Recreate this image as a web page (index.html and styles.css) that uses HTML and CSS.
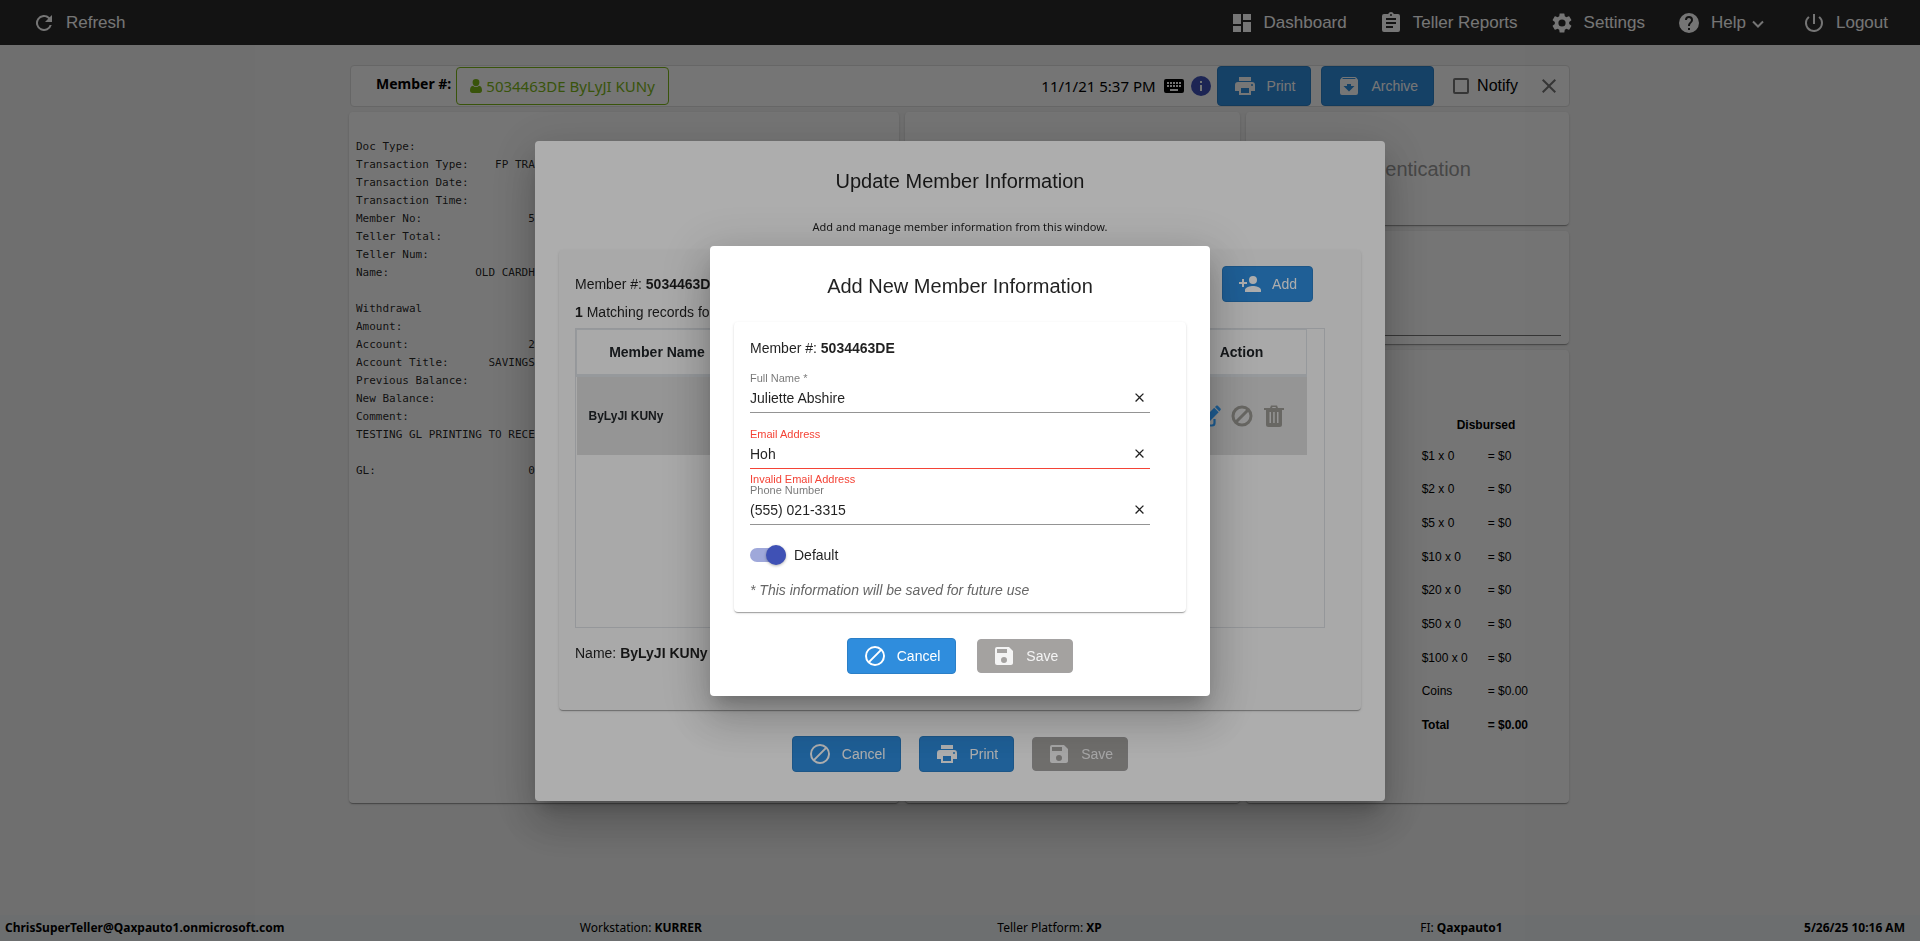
FILE: index.html
```html
<!DOCTYPE html>
<html lang="en">
<head>
<meta charset="utf-8">
<title>Teller</title>
<link rel="stylesheet" href="styles.css">
</head>
<body>
<svg class="sprite" aria-hidden="true">
  <symbol id="i-block" viewBox="0 0 24 24"><path d="M12 2a10 10 0 1 0 0 20 10 10 0 0 0 0-20zM4 12a8 8 0 0 1 12.900-6.310L5.690 16.900A7.900 7.900 0 0 1 4 12zm8 8a7.900 7.900 0 0 1-4.900-1.690L18.310 7.100A8 8 0 0 1 12 20z"/></symbol>
  <symbol id="i-save" viewBox="0 0 24 24"><path d="M17 3H5a2 2 0 0 0-2 2v14a2 2 0 0 0 2 2h14c1.100 0 2-.9 2-2V7l-4-4zm-5 16a3 3 0 1 1 0-6 3 3 0 0 1 0 6zm3-10H5V5h10v4z"/></symbol>
  <symbol id="i-print" viewBox="0 0 24 24"><path d="M19 8H5a3 3 0 0 0-3 3v6h4v4h12v-4h4v-6a3 3 0 0 0-3-3zm-3 11H8v-5h8v5zm3-7a1 1 0 1 1 0-2 1 1 0 0 1 0 2zm-1-9H6v4h12V3z"/></symbol>
  <symbol id="i-archive" viewBox="0 0 24 24"><path d="m20.540 5.230-1.390-1.680C18.880 3.210 18.470 3 18 3H6c-.47 0-.88.210-1.160.550L3.460 5.230C3.170 5.570 3 6.020 3 6.500V19a2 2 0 0 0 2 2h14a2 2 0 0 0 2-2V6.500c0-.48-.17-.93-.46-1.270zM12 17.500 6.500 12H10v-2h4v2h3.500L12 17.500zM5.120 5l.81-1h12l.94 1H5.120z"/></symbol>
  <symbol id="i-close" viewBox="0 0 24 24"><path d="M19 6.410 17.590 5 12 10.590 6.410 5 5 6.410 10.590 12 5 17.590 6.410 19 12 13.410 17.590 19 19 17.590 13.410 12z"/></symbol>
</svg>

<div class="app">
  <nav class="topbar">
    <button class="nav-item" type="button"><svg viewBox="0 0 24 24"><path d="M17.650 6.350A8 8 0 1 0 19.730 14h-2.080A6 6 0 1 1 12 6c1.660 0 3.140.690 4.220 1.780L13 11h7V4l-2.350 2.350z"/></svg>Refresh</button>
    <div class="nav-right">
      <a class="nav-item" href="#"><svg viewBox="0 0 24 24"><path d="M3 13h8V3H3v10zm0 8h8v-6H3v6zm10 0h8V11h-8v10zm0-18v6h8V3h-8z"/></svg>Dashboard</a>
      <a class="nav-item" href="#"><svg viewBox="0 0 24 24"><path d="M19 3h-4.180a3 3 0 0 0-5.640 0H5a2 2 0 0 0-2 2v14a2 2 0 0 0 2 2h14a2 2 0 0 0 2-2V5a2 2 0 0 0-2-2zm-7 0a1 1 0 1 1 0 2 1 1 0 0 1 0-2zm2 14H7v-2h7v2zm3-4H7v-2h10v2zm0-4H7V7h10v2z"/></svg>Teller Reports</a>
      <a class="nav-item" href="#"><svg viewBox="0 0 24 24"><path d="M19.140 12.940c.04-.3.060-.61.060-.94s-.02-.64-.07-.94l2.030-1.580a.49.490 0 0 0 .12-.61l-1.920-3.320a.49.490 0 0 0-.59-.22l-2.390.960c-.5-.38-1.030-.7-1.620-.94l-.36-2.540a.48.480 0 0 0-.48-.41h-3.840c-.24 0-.43.170-.47.410l-.36 2.540c-.59.240-1.130.570-1.620.940l-2.390-.96c-.22-.08-.47 0-.59.220L2.740 8.870c-.12.210-.08.470.12.610l2.030 1.580c-.05.300-.09.630-.09.940s.02.640.070.940l-2.030 1.580a.49.490 0 0 0-.12.610l1.920 3.320c.12.220.37.290.59.220l2.390-.96c.5.380 1.030.700 1.620.940l.36 2.540c.05.240.24.410.48.410h3.840c.24 0 .44-.17.470-.41l.36-2.540c.59-.24 1.130-.56 1.620-.94l2.390.960c.22.080.47 0 .59-.22l1.920-3.320c.12-.22.070-.47-.12-.61l-2.010-1.580zM12 15.600a3.600 3.600 0 1 1 0-7.200 3.600 3.600 0 0 1 0 7.200z"/></svg>Settings</a>
      <button class="nav-item" type="button"><svg viewBox="0 0 24 24"><path d="M12 2a10 10 0 1 0 0 20 10 10 0 0 0 0-20zm1 17h-2v-2h2v2zm2.070-7.750-.9.920C13.450 12.900 13 13.500 13 15h-2v-.5c0-1.100.450-2.100 1.170-2.830l1.240-1.260A2 2 0 1 0 10 9H8a4 4 0 1 1 8 0c0 .880-.36 1.680-.93 2.250z"/></svg>Help<svg class="chev" viewBox="0 0 12 8"><path d="M1 1.500 6 6.500 11 1.500" fill="none" stroke="currentColor" stroke-width="2"/></svg></button>
      <a class="nav-item" href="#"><svg viewBox="0 0 24 24"><path d="M13 3h-2v10h2V3zm4.830 2.170-1.420 1.420A7 7 0 1 1 7.580 6.580L6.170 5.170A9 9 0 1 0 21 12a8.900 8.900 0 0 0-3.170-6.830z"/></svg>Logout</a>
    </div>
  </nav>

  <main class="main">
    <header class="memberbar">
      <span class="memberbar-label">Member #:</span>
      <button class="pill" type="button"><svg viewBox="0 0 12 14"><path d="M6 0a3.400 3.400 0 0 1 3.400 3.500C9.400 5.600 7.900 7.300 6 7.300S2.600 5.600 2.600 3.500A3.400 3.400 0 0 1 6 0zM3 6.700C3.800 7.600 4.800 8 6 8s2.200-.4 3-1.300c2.200.3 3 2.300 3 4.800C12 13 11 14 9.600 14H2.400C1 14 0 13 0 11.500 0 9 .8 7 3 6.700z"/></svg>5034463DE ByLyJI KUNy</button>
      <div class="memberbar-right">
        <time>11/1/21 5:37 PM</time>
        <svg class="kbd" viewBox="0 0 20 14"><path fill-rule="evenodd" d="M2 0h16a2 2 0 0 1 2 2v10a2 2 0 0 1-2 2H2a2 2 0 0 1-2-2V2a2 2 0 0 1 2-2zm1 3v2h2V3zm3 0v2h2V3zm3 0v2h2V3zm3 0v2h2V3zm3 0v2h2V3zM3 6v2h2V6zm3 0v2h2V6zm3 0v2h2V6zm3 0v2h2V6zm3 0v2h2V6zM6 10v2h8v-2z"/></svg>
        <svg class="info" viewBox="0 0 20 20"><circle cx="10" cy="10" r="10"/><path d="M9 9h2v6H9zM9 5h2v2H9z" fill="#fff"/></svg>
        <button class="btn btn-bar" type="button"><svg><use href="#i-print"/></svg>Print</button>
        <button class="btn btn-bar btn-archive" type="button"><svg><use href="#i-archive"/></svg>Archive</button>
        <label class="notify"><input type="checkbox">Notify</label>
        <button class="icon-btn close" type="button" aria-label="Close"><svg><use href="#i-close"/></svg></button>
      </div>
    </header>
    <div class="columns">
      <section class="card receipt"><pre>Doc Type:
Transaction Type:    FP TRANSFER
Transaction Date:
Transaction Time:
Member No:                5034463DE
Teller Total:
Teller Num:
Name:             OLD CARDHOLDER

Withdrawal
Amount:
Account:                  2
Account Title:      SAVINGS
Previous Balance:
New Balance:
Comment:
TESTING GL PRINTING TO RECEIPT

GL:                       0</pre></section>
      <section class="card"></section>
      <div class="side">
        <section class="card auth">Authentication</section>
        <section class="card signature"><div class="sign-line"></div></section>
        <section class="card cash">
          <table>
            <thead><tr><th colspan="2">Disbursed</th></tr></thead>
            <tbody>
              <tr><td>$1 x 0</td><td>= $0</td></tr>
              <tr><td>$2 x 0</td><td>= $0</td></tr>
              <tr><td>$5 x 0</td><td>= $0</td></tr>
              <tr><td>$10 x 0</td><td>= $0</td></tr>
              <tr><td>$20 x 0</td><td>= $0</td></tr>
              <tr><td>$50 x 0</td><td>= $0</td></tr>
              <tr><td>$100 x 0</td><td>= $0</td></tr>
              <tr><td>Coins</td><td>= $0.00</td></tr>
              <tr class="total"><td>Total</td><td>= $0.00</td></tr>
            </tbody>
          </table>
        </section>
      </div>
    </div>
  </main>

  <footer class="footer">
    <b>ChrisSuperTeller@Qaxpauto1.onmicrosoft.com</b>
    <span>Workstation: <b>KURRER</b></span>
    <span>Teller Platform: <b>XP</b></span>
    <span class="fi">FI: <b>Qaxpauto1</b></span>
    <b>5/26/25 10:16 AM</b>
  </footer>
</div>

<div class="overlay">
  <div class="dialog dialog-update" role="dialog" aria-labelledby="t1">
    <h1 id="t1">Update Member Information</h1>
    <p class="subtitle">Add and manage member information from this window.</p>
    <section class="card panel">
      <div class="panel-head">
        <div>
          <p>Member #: <b>5034463DE</b></p>
          <p><b>1</b> Matching records found</p>
        </div>
        <button class="btn btn-add" type="button"><svg viewBox="0 0 24 24"><path d="M15 12a4 4 0 1 0 0-8 4 4 0 0 0 0 8zm-9-2V7H4v3H1v2h3v3h2v-3h3v-2H6zm9 4c-2.670 0-8 1.340-8 4v2h16v-2c0-2.660-5.330-4-8-4z"/></svg>Add</button>
      </div>
      <div class="grid">
        <table>
          <thead><tr><th>Member Name</th><th></th><th></th><th></th><th>Action</th></tr></thead>
          <tbody><tr>
            <td>ByLyJI KUNy</td><td></td><td></td><td></td>
            <td><div class="actions">
              <button class="icon-btn edit" type="button" aria-label="Edit"><svg viewBox="0 0 22 22"><path d="M15.500 14v4a2.500 2.500 0 0 1-2.500 2.500H3.500A2.500 2.500 0 0 1 1 18V6.500A2.500 2.500 0 0 1 3.500 4H10" fill="none" stroke="currentColor" stroke-width="2.200"/><path d="m6.500 11.500 8.700-8.700 4.500 4.500-8.700 8.700H6.500zM16 2l1.200-1.200c.5-.5 1.100-.5 1.600 0l2.700 2.700c.5.500.5 1.100 0 1.600L20.400 6.400z"/></svg></button>
              <button class="icon-btn" type="button" aria-label="Disable"><svg viewBox="0 0 22 22"><path d="M5 17 17 5" stroke="currentColor" stroke-width="3"/><circle cx="11" cy="11" r="9" fill="none" stroke="currentColor" stroke-width="3"/></svg></button>
              <button class="icon-btn" type="button" aria-label="Delete"><svg viewBox="0 0 22 22"><path fill-rule="evenodd" d="M7 3 8 .5h6l1 2.500h6v2h-2v14.500a2.500 2.500 0 0 1-2.500 2.500h-11A2.500 2.500 0 0 1 3 19.500V5H1V3zm2 0h4L12.500 2h-3zM6.500 7v11H8V7zm3.700 0v11h1.500V7zm3.800 0v11h1.500V7z"/></svg></button>
            </div></td>
          </tr></tbody>
        </table>
      </div>
      <p class="selected">Name: <b>ByLyJI KUNy</b></p>
    </section>
    <div class="buttons">
      <button class="btn" type="button"><svg><use href="#i-block"/></svg>Cancel</button>
      <button class="btn" type="button"><svg><use href="#i-print"/></svg>Print</button>
      <button class="btn btn-off" type="button" disabled><svg><use href="#i-save"/></svg>Save</button>
    </div>
  </div>
</div>

<div class="overlay">
  <form class="dialog dialog-add" role="dialog" aria-labelledby="t2">
    <h1 id="t2">Add New Member Information</h1>
    <section class="card panel">
      <p>Member #: <b>5034463DE</b></p>
      <div class="fields">
        <div class="field">
          <label for="name">Full Name *</label>
          <div class="control"><input id="name" type="text" value="Juliette Abshire"><button class="icon-btn clear" type="button" aria-label="Clear name"><svg><use href="#i-close"/></svg></button></div>
          <div class="hint"></div>
        </div>
        <div class="field invalid">
          <label for="email">Email Address</label>
          <div class="control"><input id="email" type="text" value="Hoh"><button class="icon-btn clear" type="button" aria-label="Clear email"><svg><use href="#i-close"/></svg></button></div>
          <div class="hint">Invalid Email Address</div>
        </div>
        <div class="field">
          <label for="phone">Phone Number</label>
          <div class="control"><input id="phone" type="text" value="(555) 021-3315"><button class="icon-btn clear" type="button" aria-label="Clear phone"><svg><use href="#i-close"/></svg></button></div>
          <div class="hint"></div>
        </div>
      </div>
      <label class="toggle"><input type="checkbox" checked>Default</label>
      <p class="note">* This information will be saved for future use</p>
    </section>
    <div class="buttons">
      <button class="btn" type="button"><svg><use href="#i-block"/></svg>Cancel</button>
      <button class="btn btn-off" type="submit" disabled><svg><use href="#i-save"/></svg>Save</button>
    </div>
  </form>
</div>
</body>
</html>
```
FILE: styles.css
```css
* { box-sizing: border-box; }
body {
  margin: 0;
  font: 14px/20px "Liberation Sans", Arial, sans-serif;
  color: rgba(0, 0, 0, .87);
}
button, input { font: inherit; color: inherit; }
button { border: 0; background: none; padding: 0; cursor: pointer; }
a { color: inherit; text-decoration: none; }
p, h1 { margin: 0; }
svg { fill: currentColor; }
.sprite { display: none; }

.app { display: flex; flex-direction: column; min-height: 100vh; background: #f2f2f2; }

/* top navigation */
.topbar {
  display: flex;
  justify-content: space-between;
  height: 45px;
  padding: 0 16px;
  background: #2b2b2b;
  color: #fff;
  font-size: 17px;
}
.nav-right { display: flex; }
.nav-item { display: flex; align-items: center; gap: 10px; padding: 0 16px; }
.nav-item svg { width: 24px; height: 24px; }
.nav-item .chev { width: 12px; height: 8px; margin: 2px 6px 0 -4px; }

.main { flex: 1; width: 100%; max-width: 1220px; margin: 0 auto; padding-top: 20px; }

/* member bar */
.memberbar {
  display: flex;
  align-items: center;
  height: 42px;
  padding-left: 25px;
  border: 1px solid #dcdcdc;
  border-radius: 4px;
  background: #fdfdfd;
  color: #000;
  font: 15px/20px "Noto Sans", sans-serif;
}
.memberbar-label { padding-bottom: 4px; font-size: 14px; font-weight: 700; }
.pill {
  display: flex;
  align-items: center;
  gap: 4px;
  height: 38px;
  margin-left: 5px;
  padding: 0 13px;
  border: 1px solid #7cb518;
  border-radius: 4px;
  color: #7cb518;
}
.pill svg { width: 12px; height: 14px; }
.memberbar-right { display: flex; align-items: center; margin-left: auto; padding-right: 8px; }
.kbd { width: 20px; height: 14px; margin: 0 7px 0 8px; }
.info { width: 20px; height: 20px; margin-right: 6px; fill: #3f51b5; }
.notify { display: flex; align-items: center; gap: 8px; margin: 0 19px; font: 16px/20px "Liberation Sans", sans-serif; }
.notify input { appearance: none; width: 16px; height: 16px; margin: 0; border: 2px solid #757575; border-radius: 2px; }
.close { color: #757575; }
.close svg { display: block; width: 24px; height: 24px; }

/* buttons */
.btn {
  display: flex;
  align-items: center;
  gap: 10px;
  height: 36px;
  padding: 0 15px;
  border: 1px solid #2b7fc7;
  border-radius: 4px;
  background: #2f8ddd;
  color: #fff;
}
.btn svg { width: 24px; height: 24px; }
.btn-bar { height: 40px; font: 14px/20px "Liberation Sans", sans-serif; }
.btn-archive { margin-left: 10px; }
.btn-off { height: 34px; padding: 0 14px; border-color: #a4a2a2; background: #a4a2a0; color: #f4f4f4; }

/* cards */
.card {
  border-radius: 4px;
  background: #fdfdfd;
  box-shadow: 0 2px 1px -1px rgba(0, 0, 0, .2), 0 1px 1px rgba(0, 0, 0, .14), 0 1px 3px rgba(0, 0, 0, .12);
}
.columns {
  display: grid;
  grid-template-columns: 550fr 335fr 323fr;
  gap: 6px;
  height: 691px;
  margin: 5px 1px 0 -1px;
}
.receipt { padding: 26px 7px; overflow: hidden; }
.receipt pre { margin: 0; font: 11px/18px "DejaVu Sans Mono", monospace; }
.side { display: flex; flex-direction: column; gap: 6px; }
.auth { display: flex; align-items: center; justify-content: center; height: 113px; font-size: 20px; color: #999; }
.signature { display: flex; align-items: flex-end; height: 113px; padding: 8px; }
.sign-line { flex: 1; border-bottom: 1px solid #757575; }
.cash { flex: 1; padding: 61px 41px 0; font-size: 12px; line-height: 16px; color: #000; }
.cash table { width: 105px; height: 331px; margin-left: auto; border-collapse: collapse; white-space: nowrap; }
.cash th, .cash td { padding: 0; text-align: left; }
.cash th { height: 28px; padding-left: 35px; }
.cash td { height: 33px; }
.cash td:first-child { width: 66px; min-width: 66px; }
.total { font-weight: 700; }

/* status bar */
.footer {
  display: flex;
  justify-content: space-between;
  height: 26px;
  padding: 0 15px 0 5px;
  background: #ebeff2;
  color: #000;
  font: 12px/26px "Noto Sans", sans-serif;
}
.fi { margin: 0 6px 0 23px; }

/* dialogs */
.overlay {
  position: fixed;
  inset: 0;
  display: flex;
  align-items: center;
  justify-content: center;
  background: rgba(0, 0, 0, .32);
}
.dialog {
  padding: 24px;
  border-radius: 4px;
  background: #fff;
  box-shadow: 0 11px 15px -7px rgba(0, 0, 0, .2), 0 24px 38px 3px rgba(0, 0, 0, .14), 0 9px 46px 8px rgba(0, 0, 0, .12);
}
.dialog-update { width: 850px; }
.dialog-add { width: 500px; padding-bottom: 22px; }
.dialog h1 { font-size: 20px; font-weight: 400; line-height: 32px; text-align: center; }
.dialog .card { background: #fff; }
.subtitle { margin: 21px 0 14px; font: 11px/18px "Noto Sans", sans-serif; text-align: center; }
.panel { padding: 16px; }
.buttons { display: flex; align-items: center; justify-content: center; gap: 21px; padding-top: 26px; }

.dialog-update .card { padding-bottom: 47px; background: #fafafa; }
.dialog-update .buttons { gap: 18px; padding-bottom: 5px; }
.panel-head { display: flex; justify-content: space-between; padding-right: 32px; line-height: 28px; }
.panel-head p:first-child { margin-top: 4px; }
.grid { height: 300px; margin: 2px 20px 15px 0; padding-right: 17px; border: 1px solid #dcdfe3; }
.grid table { width: 100%; border-collapse: collapse; table-layout: fixed; color: #212529; }
.grid th { height: 46px; border: 2px solid #dee2e6; border-width: 1px 1px 3px; }
.grid td { height: 80px; padding: 0 12px; background: #dcdcdc; font-size: 12px; font-weight: 700; }
.grid th:first-child { width: 161px; }
.grid th:last-child { width: 130px; }
.actions { display: flex; justify-content: center; gap: 10px; margin: 0 -12px; color: #9a9892; }
.actions svg { display: block; width: 22px; height: 22px; }
.actions .edit { color: #2f8ddd; }

/* form */
.dialog-add .card { margin-top: 20px; padding-bottom: 12px; }
.dialog-add .card { background: #fff; }
.fields { padding: 14px 0 5px; }
.field { width: 400px; }
.field label { display: block; color: rgba(0, 0, 0, .54); font-size: 11px; line-height: 12px; }
.control { display: flex; height: 29px; border-bottom: 1px solid #949494; }
.control input { flex: 1; min-width: 0; padding: 0; border: 0; outline: 0; background: none; }
.clear svg { display: block; width: 15px; height: 15px; margin-right: 3px; }
.hint { height: 15px; padding-top: 4px; font-size: 11px; line-height: 12px; }
.invalid label, .invalid .hint { color: #f44336; }
.invalid .control { border-bottom-color: #f44336; }
.toggle { display: flex; align-items: center; gap: 8px; }
.toggle input {
  appearance: none;
  display: flex;
  align-items: center;
  justify-content: flex-end;
  width: 36px;
  height: 14px;
  margin: 0;
  border-radius: 7px;
  background: #9fa8da;
}
.toggle input::before {
  content: "";
  width: 20px;
  height: 20px;
  border-radius: 50%;
  background: #3f51b5;
  box-shadow: 0 1px 3px rgba(0, 0, 0, .3);
}
.note { margin-top: 15px; font-style: italic; color: #666; }
```
